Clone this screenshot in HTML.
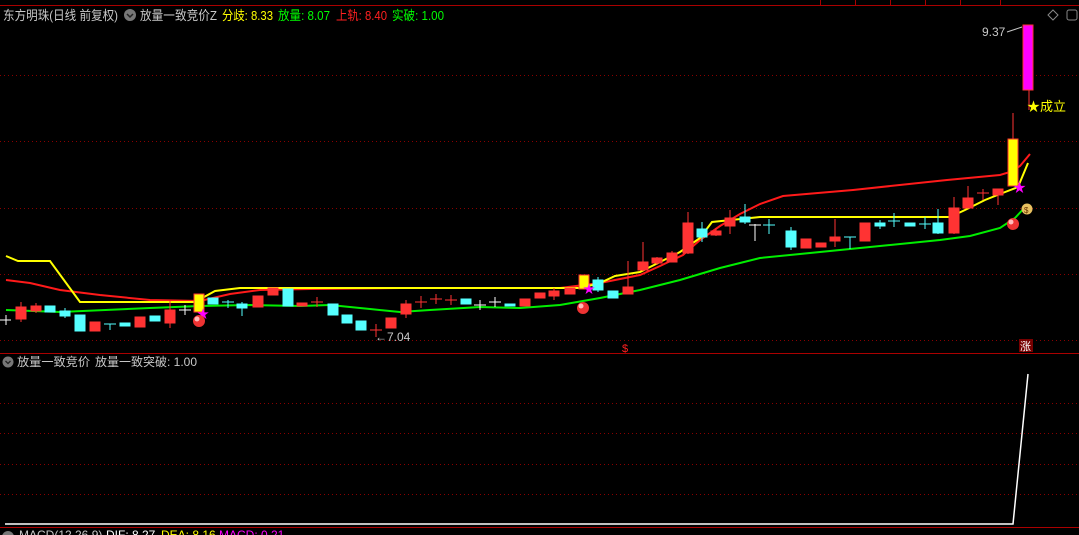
<!DOCTYPE html>
<html><head><meta charset="utf-8"><style>
html,body{margin:0;padding:0;background:#000;width:1079px;height:535px;overflow:hidden}
svg{display:block}
text{font-family:"Liberation Sans","Noto Sans CJK SC",sans-serif}
</style></head><body>
<svg width="1079" height="535" viewBox="0 0 1079 535" xmlns="http://www.w3.org/2000/svg">
<rect width="1079" height="535" fill="#000"/>
<line x1="0" y1="5.5" x2="1079" y2="5.5" stroke="#a00" stroke-width="1"/>
<g stroke="#a00"><line x1="820.5" y1="0" x2="820.5" y2="5"/><line x1="855.5" y1="0" x2="855.5" y2="5"/><line x1="890.5" y1="0" x2="890.5" y2="5"/><line x1="925.5" y1="0" x2="925.5" y2="5"/><line x1="960.5" y1="0" x2="960.5" y2="5"/><line x1="1000.5" y1="0" x2="1000.5" y2="5"/></g>
<g stroke="#8a0000" stroke-dasharray="1,3">
<line x1="0" y1="75.5" x2="1079" y2="75.5"/><line x1="0" y1="141.5" x2="1079" y2="141.5"/><line x1="0" y1="208.5" x2="1079" y2="208.5"/><line x1="0" y1="274.5" x2="1079" y2="274.5"/><line x1="0" y1="340.5" x2="1079" y2="340.5"/>
<line x1="0" y1="403.5" x2="1079" y2="403.5"/><line x1="0" y1="433.5" x2="1079" y2="433.5"/><line x1="0" y1="464.5" x2="1079" y2="464.5"/><line x1="0" y1="494.5" x2="1079" y2="494.5"/>
</g>
<line x1="0" y1="353.5" x2="1079" y2="353.5" stroke="#a00"/>
<line x1="0" y1="527.5" x2="1079" y2="527.5" stroke="#a00"/>
<text x="3" y="20" font-size="13" fill="#c8c8c8" textLength="115" lengthAdjust="spacingAndGlyphs">东方明珠(日线 前复权)</text>
<circle cx="130" cy="15" r="6" fill="#777"/><path d="M127 14l3 3 3-3" stroke="#222" stroke-width="1.5" fill="none"/>
<text x="140" y="20" font-size="13" fill="#c8c8c8" textLength="77" lengthAdjust="spacingAndGlyphs">放量一致竞价Z</text>
<text x="222" y="20" font-size="13" fill="#ffff00" textLength="51" lengthAdjust="spacingAndGlyphs">分歧: 8.33</text>
<text x="278" y="20" font-size="13" fill="#00ff00" textLength="52" lengthAdjust="spacingAndGlyphs">放量: 8.07</text>
<text x="336" y="20" font-size="13" fill="#ff2020" textLength="51" lengthAdjust="spacingAndGlyphs">上轨: 8.40</text>
<text x="392" y="20" font-size="13" fill="#00ff00" textLength="52" lengthAdjust="spacingAndGlyphs">实破: 1.00</text>
<path d="M1053 10l5 5-5 5-5-5z" stroke="#888" fill="none"/>
<rect x="1067" y="10" width="10" height="10" rx="2" stroke="#888" fill="none"/>
<polyline fill="none" stroke="#ff1a1a" stroke-width="2" points="6,280 30,283 60,290 100,295 150,300 200,301 230,294 260,290 310,289 400,288 560,288 600,283 640,275 660,266 683,255 700,240 720,226 740,214 760,204 783,196 853,190 947,180 1000,175 1010,172 1020,166 1030,154"/>
<polyline fill="none" stroke="#ffff00" stroke-width="2" points="6,256 18,261 50,261 80,302 195,302 215,291 240,288 300,288 580,288 600,283 615,276 640,272 660,262 680,252 700,238 712,222 760,217 950,217 965,210 985,200 1000,194 1018,187 1028,163"/>
<polyline fill="none" stroke="#00ee00" stroke-width="2" points="6,310 60,312 150,308 200,306 250,305 300,306 330,305 370,309 400,312 430,310 480,307 520,308 560,305 600,298 640,290 680,280 720,268 760,258 800,254 860,248 940,240 970,236 1000,228 1015,218 1027,205"/>
<g stroke-width="1">
<g fill="#ff3333" stroke="#ff3333">
<rect x="16" y="307" width="10" height="12"/><line x1="21" y1="302" x2="21" y2="322"/>
<rect x="31" y="306" width="10" height="5"/><line x1="36" y1="303" x2="36" y2="313"/>
<rect x="90" y="322" width="10" height="9"/>
<rect x="135" y="317" width="10" height="10"/>
<rect x="165" y="310" width="10" height="13"/><line x1="170" y1="301" x2="170" y2="328"/>
<rect x="253" y="296" width="10" height="11"/>
<rect x="268" y="288" width="10" height="7"/>
<rect x="297" y="303" width="10" height="3"/>
<line x1="311" y1="302" x2="323" y2="302"/><line x1="317" y1="297" x2="317" y2="307"/>
<line x1="370" y1="330" x2="382" y2="330"/><line x1="376" y1="324" x2="376" y2="337"/>
<rect x="386" y="318" width="10" height="10"/>
<rect x="401" y="304" width="10" height="10"/><line x1="406" y1="300" x2="406" y2="318"/>
<line x1="415" y1="302" x2="427" y2="302"/><line x1="421" y1="296" x2="421" y2="308"/>
<line x1="430" y1="299" x2="442" y2="299"/><line x1="436" y1="294" x2="436" y2="304"/>
<line x1="445" y1="300" x2="457" y2="300"/><line x1="451" y1="295" x2="451" y2="305"/>
<rect x="520" y="299" width="10" height="7"/>
<rect x="535" y="293" width="10" height="5"/>
<rect x="549" y="291" width="10" height="5"/><line x1="554" y1="288" x2="554" y2="300"/>
<rect x="565" y="288" width="10" height="6"/>
<rect x="623" y="287" width="10" height="7"/><line x1="628" y1="261" x2="628" y2="294"/>
<rect x="638" y="262" width="10" height="8"/><line x1="643" y1="242" x2="643" y2="271"/>
<rect x="652" y="258" width="10" height="5"/><line x1="657" y1="257" x2="657" y2="265"/>
<rect x="667" y="253" width="10" height="9"/><line x1="672" y1="251" x2="672" y2="262"/>
<rect x="683" y="223" width="10" height="30"/><line x1="688" y1="212" x2="688" y2="254"/>
<rect x="711" y="231" width="10" height="4"/><line x1="716" y1="228" x2="716" y2="236"/>
<rect x="725" y="218" width="10" height="8"/><line x1="730" y1="210" x2="730" y2="234"/>
<rect x="801" y="239" width="10" height="9"/>
<rect x="816" y="243" width="10" height="4"/>
<rect x="830" y="237" width="10" height="4"/><line x1="835" y1="219" x2="835" y2="247"/>
<rect x="860" y="223" width="10" height="18"/>
<rect x="949" y="208" width="10" height="25"/><line x1="954" y1="197" x2="954" y2="234"/>
<rect x="963" y="198" width="10" height="10"/><line x1="968" y1="186" x2="968" y2="208"/>
<line x1="977" y1="193" x2="989" y2="193"/><line x1="983" y1="189" x2="983" y2="200"/>
<rect x="993" y="189" width="10" height="6"/><line x1="998" y1="189" x2="998" y2="205"/>
<line x1="1013" y1="113" x2="1013" y2="139"/>
<line x1="1029" y1="90" x2="1029" y2="110"/>
</g>
<g fill="#55ffff" stroke="#55ffff">
<rect x="45" y="306" width="10" height="6"/>
<rect x="60" y="311" width="10" height="5"/><line x1="65" y1="308" x2="65" y2="318"/>
<rect x="75" y="315" width="10" height="16"/>
<line x1="104" y1="324" x2="116" y2="324"/><line x1="110" y1="324" x2="110" y2="330"/>
<rect x="120" y="323" width="10" height="3"/>
<rect x="150" y="316" width="10" height="5"/>
<rect x="208" y="298" width="10" height="6"/>
<line x1="222" y1="302" x2="234" y2="302"/><line x1="228" y1="300" x2="228" y2="308"/>
<rect x="237" y="304" width="10" height="4"/><line x1="242" y1="302" x2="242" y2="316"/>
<rect x="283" y="289" width="10" height="17"/>
<rect x="328" y="304" width="10" height="11"/>
<rect x="342" y="315" width="10" height="8"/>
<rect x="356" y="321" width="10" height="9"/>
<rect x="461" y="299" width="10" height="5"/>
<rect x="505" y="304" width="10" height="2"/>
<rect x="593" y="280" width="10" height="10"/><line x1="598" y1="277" x2="598" y2="292"/>
<rect x="608" y="291" width="10" height="7"/>
<rect x="697" y="229" width="10" height="8"/><line x1="702" y1="222" x2="702" y2="242"/>
<rect x="740" y="217" width="10" height="5"/><line x1="745" y1="204" x2="745" y2="224"/>
<line x1="763" y1="225" x2="775" y2="225"/><line x1="769" y1="219" x2="769" y2="234"/>
<rect x="786" y="231" width="10" height="16"/><line x1="791" y1="227" x2="791" y2="250"/>
<line x1="844" y1="237" x2="856" y2="237"/><line x1="850" y1="237" x2="850" y2="249"/>
<rect x="875" y="223" width="10" height="3"/><line x1="880" y1="220" x2="880" y2="229"/>
<line x1="888" y1="221" x2="900" y2="221"/><line x1="894" y1="213" x2="894" y2="227"/>
<rect x="905" y="223" width="10" height="3"/>
<line x1="919" y1="224" x2="931" y2="224"/><line x1="925" y1="217" x2="925" y2="229"/>
<rect x="933" y="223" width="10" height="10"/><line x1="938" y1="209" x2="938" y2="234"/>
</g>
<g stroke="#fff">
<line x1="0" y1="320" x2="11" y2="320"/><line x1="6" y1="315" x2="6" y2="325"/>
<line x1="179" y1="310" x2="191" y2="310"/><line x1="185" y1="305" x2="185" y2="315"/>
<line x1="474" y1="305" x2="486" y2="305"/><line x1="480" y1="300" x2="480" y2="310"/>
<line x1="489" y1="302" x2="501" y2="302"/><line x1="495" y1="297" x2="495" y2="307"/>
<line x1="749" y1="225" x2="761" y2="225"/><line x1="755" y1="224" x2="755" y2="241"/>
</g>
<rect x="194" y="294" width="10" height="18" fill="#ffff00" stroke="#ff3333"/>
<rect x="579" y="275" width="10" height="14" fill="#ffff00" stroke="#ff3333"/>
<rect x="1008" y="139" width="10" height="47" fill="#ffff00" stroke="#ff3333"/>
<rect x="1023" y="25" width="10" height="65" fill="#ff00ff" stroke="#ff3333"/>
</g>
<text x="197" y="318" font-size="12" fill="#ff00ff">★</text>
<text x="583" y="293" font-size="12" fill="#ff00ff">★</text>
<text x="1013" y="192" font-size="13" fill="#ff00ff">★</text>
<circle cx="199" cy="321" r="6" fill="#e33"/><circle cx="197" cy="319" r="2.5" fill="#fbb"/>
<circle cx="583" cy="308" r="6" fill="#e33"/><circle cx="581" cy="306" r="2.5" fill="#fbb"/>
<circle cx="1013" cy="224" r="6" fill="#e33"/><circle cx="1011" cy="222" r="2.5" fill="#fbb"/>
<circle cx="1027" cy="209" r="5.5" fill="#e8c060"/><text x="1024" y="213" font-size="8" fill="#630">$</text>
<text x="1027" y="111" font-size="13" fill="#ffff00">★成立</text>
<text x="982" y="36" font-size="12" fill="#c8c8c8">9.37</text>
<line x1="1007" y1="32" x2="1022" y2="27" stroke="#c8c8c8"/>
<text x="375" y="341" font-size="12" fill="#c8c8c8">←7.04</text>
<text x="622" y="352" font-size="11" fill="#ff2020">$</text>
<rect x="1019" y="339" width="14" height="13" fill="#700"/><text x="1020" y="350" font-size="11" fill="#fff">涨</text>
<circle cx="8" cy="362" r="5.5" fill="#777"/><path d="M5.5 361l2.5 2.5 2.5-2.5" stroke="#222" stroke-width="1.3" fill="none"/>
<text x="17" y="366" font-size="12" fill="#c8c8c8" textLength="73" lengthAdjust="spacingAndGlyphs">放量一致竞价</text>
<text x="95" y="366" font-size="12" fill="#c8c8c8" textLength="102" lengthAdjust="spacingAndGlyphs">放量一致突破: 1.00</text>
<polyline fill="none" stroke="#fff" stroke-width="1.5" points="5,524 1013,524 1028,374"/>
<circle cx="8" cy="537" r="6" fill="#777"/>
<text x="19" y="539" font-size="12" fill="#c8c8c8">MACD(12,26,9)</text>
<text x="106" y="539" font-size="12" fill="#fff">DIF: 8.27</text>
<text x="161" y="539" font-size="12" fill="#ffff00">DEA: 8.16</text>
<text x="219" y="539" font-size="12" fill="#ff00ff">MACD: 0.21</text>
</svg>
</body></html>
